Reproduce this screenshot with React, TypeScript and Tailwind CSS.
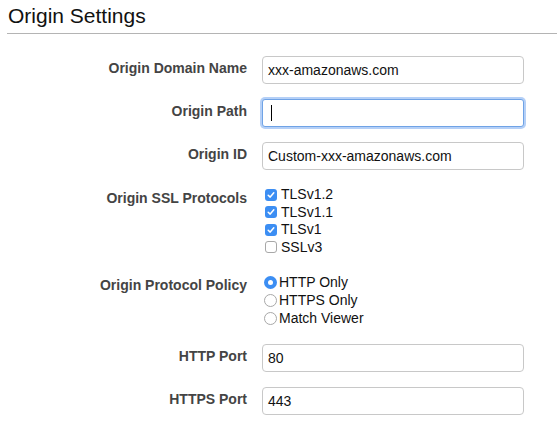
import { ReactNode } from "react";

const Check = ({ checked }: { checked: boolean }) =>
  checked ? (
    <div className="flex h-[12px] w-[12px] items-center justify-center rounded-[3px] bg-[#3c8ef3]">
      <svg width="8" height="8" viewBox="0 0 8 8">
        <path d="M1.2 4.2 L3.2 6.1 L6.8 1.8" fill="none" stroke="white" strokeWidth="1.5" strokeLinecap="round" strokeLinejoin="round" />
      </svg>
    </div>
  ) : (
    <div className="h-[12px] w-[12px] rounded-[3px] border border-[#a8a8a8] bg-white" />
  );

const Radio = ({ checked }: { checked: boolean }) =>
  checked ? (
    <div className="flex h-[13px] w-[13px] items-center justify-center rounded-full bg-[#3c8ef3]">
      <div className="h-[5px] w-[5px] rounded-full bg-white" />
    </div>
  ) : (
    <div className="h-[13px] w-[13px] rounded-full border border-[#a8a8a8] bg-white" />
  );

const Row = ({ label, children, className = "" }: { label: string; children: ReactNode; className?: string }) => (
  <div className={`flex ${className}`}>
    <div className="w-[247px] pt-[2px] text-right text-[14px] leading-5 font-bold text-[#444]">
      {label}
    </div>
    <div className="ml-[15px]">{children}</div>
  </div>
);

const TextBox = ({ value }: { value: string }) => (
  <div className="flex h-[28px] w-[262px] items-center rounded-[4px] border border-[#c8c8c8] bg-white px-[5px] text-[14px] text-[#111]">
    {value}
  </div>
);

const App = () => {
  const protocols = [
    { name: "TLSv1.2", on: true },
    { name: "TLSv1.1", on: true },
    { name: "TLSv1", on: true },
    { name: "SSLv3", on: false },
  ];
  const policies = ["HTTP Only", "HTTPS Only", "Match Viewer"];

  return (
    <div className="h-[427px] w-[557px] overflow-hidden bg-white font-['Liberation_Sans',Arial,sans-serif]">
      <h2 className="pt-[4px] pl-[8px] text-[21px] leading-[24px] text-[#111]">Origin Settings</h2>
      <div className="mt-[5px] ml-[7px] h-px bg-[#b4b4b4]" />

      <div className="flex flex-col">
        <Row label="Origin Domain Name" className="mt-[22px]">
          <TextBox value="xxx-amazonaws.com" />
        </Row>
        <Row label="Origin Path" className="mt-[15px]">
          <div className="flex h-[28px] w-[262px] items-center rounded-[3px] border border-[#6fa3e6] bg-white px-[8px] shadow-[0_0_0_2px_rgba(120,170,240,0.55)]">
            <div className="h-[16px] w-px bg-black" />
          </div>
        </Row>
        <Row label="Origin ID" className="mt-[15px]">
          <TextBox value="Custom-xxx-amazonaws.com" />
        </Row>

        <Row label="Origin SSL Protocols" className="mt-[16px]">
          <div className="flex flex-col">
            {protocols.map((p) => (
              <div key={p.name} className="flex h-[17.5px] items-center text-[14px] text-[#111]">
                <div className="ml-[3px] mr-[4px]">
                  <Check checked={p.on} />
                </div>
                {p.name}
              </div>
            ))}
          </div>
        </Row>

        <Row label="Origin Protocol Policy" className="mt-[17px]">
          <div className="flex flex-col">
            {policies.map((p, i) => (
              <div key={p} className="flex h-[18px] items-center text-[14px] text-[#111]">
                <div className="ml-[2px] mr-[2px]">
                  <Radio checked={i === 0} />
                </div>
                {p}
              </div>
            ))}
          </div>
        </Row>

        <Row label="HTTP Port" className="mt-[17px]">
          <TextBox value="80" />
        </Row>
        <Row label="HTTPS Port" className="mt-[15px]">
          <TextBox value="443" />
        </Row>
      </div>
    </div>
  );
};

export default App;
